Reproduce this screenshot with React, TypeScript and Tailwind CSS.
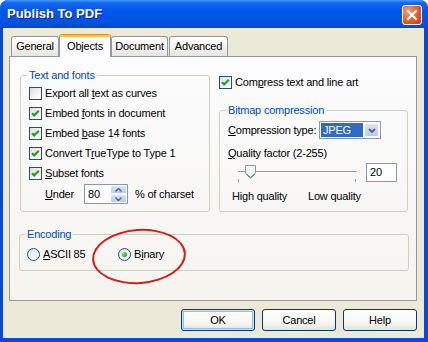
import React from "react";

function Checkbox({ checked }: { checked: boolean }) {
  return (
    <span className="relative w-[13px] h-[13px] shrink-0 border border-[#1c5180] bg-[linear-gradient(135deg,#dcdcd7,#ffffff_80%)]">
      {checked && (
        <svg className="absolute left-0 top-0" width="11" height="11" viewBox="0 0 11 11">
          <polyline points="2,5.2 4.2,7.4 8.8,2.8" fill="none" stroke="#21a121" strokeWidth="2.2" />
        </svg>
      )}
    </span>
  );
}

function CheckRow({ checked, children }: { checked: boolean; children: React.ReactNode }) {
  return (
    <div className="h-[20px] flex items-center gap-[3px]">
      <Checkbox checked={checked} />
      <span className="whitespace-nowrap">{children}</span>
    </div>
  );
}

function Radio({ checked }: { checked: boolean }) {
  return (
    <span className="relative w-[13px] h-[13px] shrink-0 rounded-full border border-[#1c5180] bg-[linear-gradient(135deg,#dcdcd7,#ffffff_80%)] flex items-center justify-center">
      {checked && (
        <span className="w-[5px] h-[5px] rounded-full bg-[radial-gradient(circle_at_35%_35%,#8fe08f,#21a121_70%)]" />
      )}
    </span>
  );
}

function U({ children }: { children: React.ReactNode }) {
  return <span className="underline underline-offset-[1px]">{children}</span>;
}

function Legend({ children }: { children: React.ReactNode }) {
  return <legend className="-ml-[2px] px-[2px] text-[#0046d5] leading-[13px]">{children}</legend>;
}

function Button({ children, def }: { children: React.ReactNode; def?: boolean }) {
  return (
    <div
      className={`w-[74px] h-[22px] rounded-[3px] border border-[#003c74] bg-[linear-gradient(180deg,#ffffff_0%,#f4f4f0_70%,#e3e1d6_100%)] flex items-center justify-center ${
        def ? "shadow-[inset_0_0_0_1px_#cee7ff,inset_0_0_0_2px_#98b8ea]" : ""
      }`}
    >
      {children}
    </div>
  );
}

export default function App() {
  return (
    <div className="relative w-[428px] h-[342px] rounded-t-[8px] bg-[#0a48d6] flex flex-col pl-[3px] pr-[4px] pb-[4px] font-['Liberation_Sans',Arial,sans-serif] text-[11px] leading-[13px] tracking-[-0.2px] text-black overflow-hidden">
      {/* title bar */}
      <div className="-ml-[3px] -mr-[4px] h-[28px] shrink-0 rounded-t-[8px] bg-[linear-gradient(180deg,#4a9bff_0%,#1466ee_10%,#0058e8_40%,#0054e3_75%,#0048d0_100%)] flex items-start pl-[7px] pr-[6px]">
        <span className="mt-[6px] text-white font-bold text-[13px] leading-[16px] tracking-normal [text-shadow:1px_1px_0_#0a2a8a] flex-1">
          Publish To PDF
        </span>
        <div className="mt-[5px] w-[20px] h-[20px] rounded-[3px] border border-white bg-[radial-gradient(circle_at_30%_30%,#f0a080,#e45a2c_55%,#c83c10_100%)] flex items-center justify-center">
          <svg width="12" height="12" viewBox="0 0 12 12">
            <path d="M2 2 L10 10 M10 2 L2 10" stroke="white" strokeWidth="2" strokeLinecap="square" />
          </svg>
        </div>
      </div>

      {/* body */}
      <div className="flex-1 bg-[#ece9d8] pt-[6px] pl-[6px] pr-[7px] flex flex-col">
        {/* tabs */}
        <div className="h-[22px] flex items-end pl-[2px]">
          <div className="w-[48px] h-[20px] rounded-t-[3px] border border-b-0 border-[#919b9c] bg-[linear-gradient(180deg,#ffffff,#f2f1ec_60%,#e6e5df)] flex items-center justify-center">
            General
          </div>
          <div className="relative z-10 w-[52px] h-[23px] -mb-[1px] rounded-t-[3px] border-x border-[#919b9c] bg-[#fcfcfe] flex flex-col overflow-hidden">
            <div className="h-[1px] bg-[#e68b2c] shrink-0" />
            <div className="h-[2px] bg-[#ffc73c] shrink-0" />
            <div className="flex-1 flex items-center justify-center pb-[2px]">Objects</div>
          </div>
          <div className="w-[57px] h-[20px] rounded-t-[3px] border border-b-0 border-[#919b9c] bg-[linear-gradient(180deg,#ffffff,#f2f1ec_60%,#e6e5df)] flex items-center justify-center">
            Document
          </div>
          <div className="ml-[1px] w-[59px] h-[20px] rounded-t-[3px] border border-b-0 border-[#919b9c] bg-[linear-gradient(180deg,#ffffff,#f2f1ec_60%,#e6e5df)] flex items-center justify-center">
            Advanced
          </div>
        </div>

        {/* panel */}
        <div className="w-[408px] h-[245px] border border-[#919b9c] bg-[linear-gradient(180deg,#fcfcfe,#f5f4ef)] pt-[12px] pl-[10px] flex flex-col">
          <div className="flex gap-[9px]">
            {/* text and fonts */}
            <fieldset className="w-[190px] border border-[#d0d0bf] rounded-[3px] pl-[8px] pt-[1px] pb-[6px]">
              <Legend>Text and fonts</Legend>
              <CheckRow checked={false}>
                Export all <U>t</U>ext as curves
              </CheckRow>
              <CheckRow checked={true}>
                Embed <U>f</U>onts in document
              </CheckRow>
              <CheckRow checked={true}>
                Embed <U>b</U>ase 14 fonts
              </CheckRow>
              <CheckRow checked={true}>
                Convert T<U>r</U>ueType to Type 1
              </CheckRow>
              <CheckRow checked={true}>
                <U>S</U>ubset fonts
              </CheckRow>
              <div className="mt-[1px] h-[20px] flex items-center pl-[16px]">
                <span className="w-[39px]">
                  <U>U</U>nder
                </span>
                <div className="w-[44px] h-[20px] border border-[#7f9db9] bg-white flex items-center pl-[3px]">
                  <span className="flex-1">80</span>
                  <div className="w-[17px] h-[18px] flex flex-col">
                    <div className="h-[9px] border border-white rounded-[2px] bg-[linear-gradient(180deg,#d9e5fd,#b6cbf7)] flex items-center justify-center">
                      <svg width="7" height="4" viewBox="0 0 7 4">
                        <path d="M0.5 3.5 L3.5 0.5 L6.5 3.5" fill="none" stroke="#4d6185" strokeWidth="1.4" />
                      </svg>
                    </div>
                    <div className="h-[9px] border border-white rounded-[2px] bg-[linear-gradient(180deg,#d9e5fd,#b6cbf7)] flex items-center justify-center">
                      <svg width="7" height="4" viewBox="0 0 7 4">
                        <path d="M0.5 0.5 L3.5 3.5 L6.5 0.5" fill="none" stroke="#4d6185" strokeWidth="1.4" />
                      </svg>
                    </div>
                  </div>
                </div>
                <span className="ml-[7px] whitespace-nowrap">% of charset</span>
              </div>
            </fieldset>

            {/* right column */}
            <div className="w-[189px] flex flex-col">
              <div className="mt-[3px]">
                <CheckRow checked={true}>
                  Com<U>p</U>ress text and line art
                </CheckRow>
              </div>
              <fieldset className="mt-[12px] border border-[#d0d0bf] rounded-[3px] pl-[8px] pb-[8px]">
                <Legend>Bitmap compression</Legend>
                <div className="mt-[4px] h-[18px] flex items-center">
                  <span className="w-[91px] whitespace-nowrap">
                    <U>C</U>ompression type:
                  </span>
                  <div className="w-[62px] h-[18px] border border-[#7f9db9] bg-white flex items-center p-[1px]">
                    <div className="flex-1 h-full bg-[#316ac5] text-white flex items-center pl-[2px]">JPEG</div>
                    <div className="ml-[1px] w-[15px] h-full rounded-[2px] border border-white bg-[linear-gradient(180deg,#d9e5fd,#b6cbf7)] flex items-center justify-center">
                      <svg width="8" height="5" viewBox="0 0 8 5">
                        <path d="M1 1 L4 4 L7 1" fill="none" stroke="#4d6185" strokeWidth="1.8" />
                      </svg>
                    </div>
                  </div>
                </div>
                <div className="mt-[8px] h-[13px] whitespace-nowrap">
                  <U>Q</U>uality factor (2-255)
                </div>
                <div className="mt-[2px] h-[20px] flex items-center">
                  <div className="relative ml-[10px] w-[119px] h-[20px]">
                    <div className="absolute left-0 right-0 top-[9px] h-[1px] bg-[#9d9c99]" />
                    <div className="absolute left-0 right-0 top-[10px] h-[1px] bg-white" />
                    <div className="absolute left-0 top-[17px] w-[1px] h-[3px] bg-[#9d9c99]" />
                    <div className="absolute right-[1px] top-[17px] w-[1px] h-[3px] bg-[#9d9c99]" />
                    <svg className="absolute left-[7px] top-[3px]" width="11" height="14" viewBox="0 0 11 14">
                      <path d="M0.5 0.5 H10.5 V8.5 L5.5 13.5 L0.5 8.5 Z" fill="#f5f5f1" stroke="#8c9aa8" />
                      <path d="M1.5 9 L5.5 12.5 L9.5 9" fill="none" stroke="#21a121" strokeWidth="1" />
                    </svg>
                  </div>
                  <div className="ml-[9px] w-[31px] h-[19px] border border-[#7f9db9] bg-white flex items-center pl-[3px]">
                    20
                  </div>
                </div>
                <div className="mt-[8px] h-[13px] flex pl-[4px]">
                  <span className="w-[76px]">High quality</span>
                  <span>Low quality</span>
                </div>
              </fieldset>
            </div>
          </div>

          {/* encoding */}
          <fieldset className="mt-[16px] -ml-[1px] w-[390px] border border-[#d0d0bf] rounded-[3px] pl-[7px] pb-[6px]">
            <Legend>Encoding</Legend>
            <div className="mt-[3px] h-[20px] flex items-center">
              <div className="w-[91px] flex items-center gap-[3px]">
                <Radio checked={false} />
                <span>
                  <U>A</U>SCII 85
                </span>
              </div>
              <div className="flex items-center gap-[3px]">
                <Radio checked={true} />
                <span>
                  B<U>i</U>nary
                </span>
              </div>
            </div>
          </fieldset>
        </div>

        {/* buttons */}
        <div className="mt-[8px] flex justify-end gap-[7px]">
          <Button def>OK</Button>
          <Button>Cancel</Button>
          <Button>Help</Button>
        </div>
      </div>

      {/* red annotation ellipse */}
      <div className="absolute left-[92px] top-[229px] w-[94px] h-[55px] rounded-[50%] border-2 border-[#d21c1c] -rotate-[4deg]" />
    </div>
  );
}
